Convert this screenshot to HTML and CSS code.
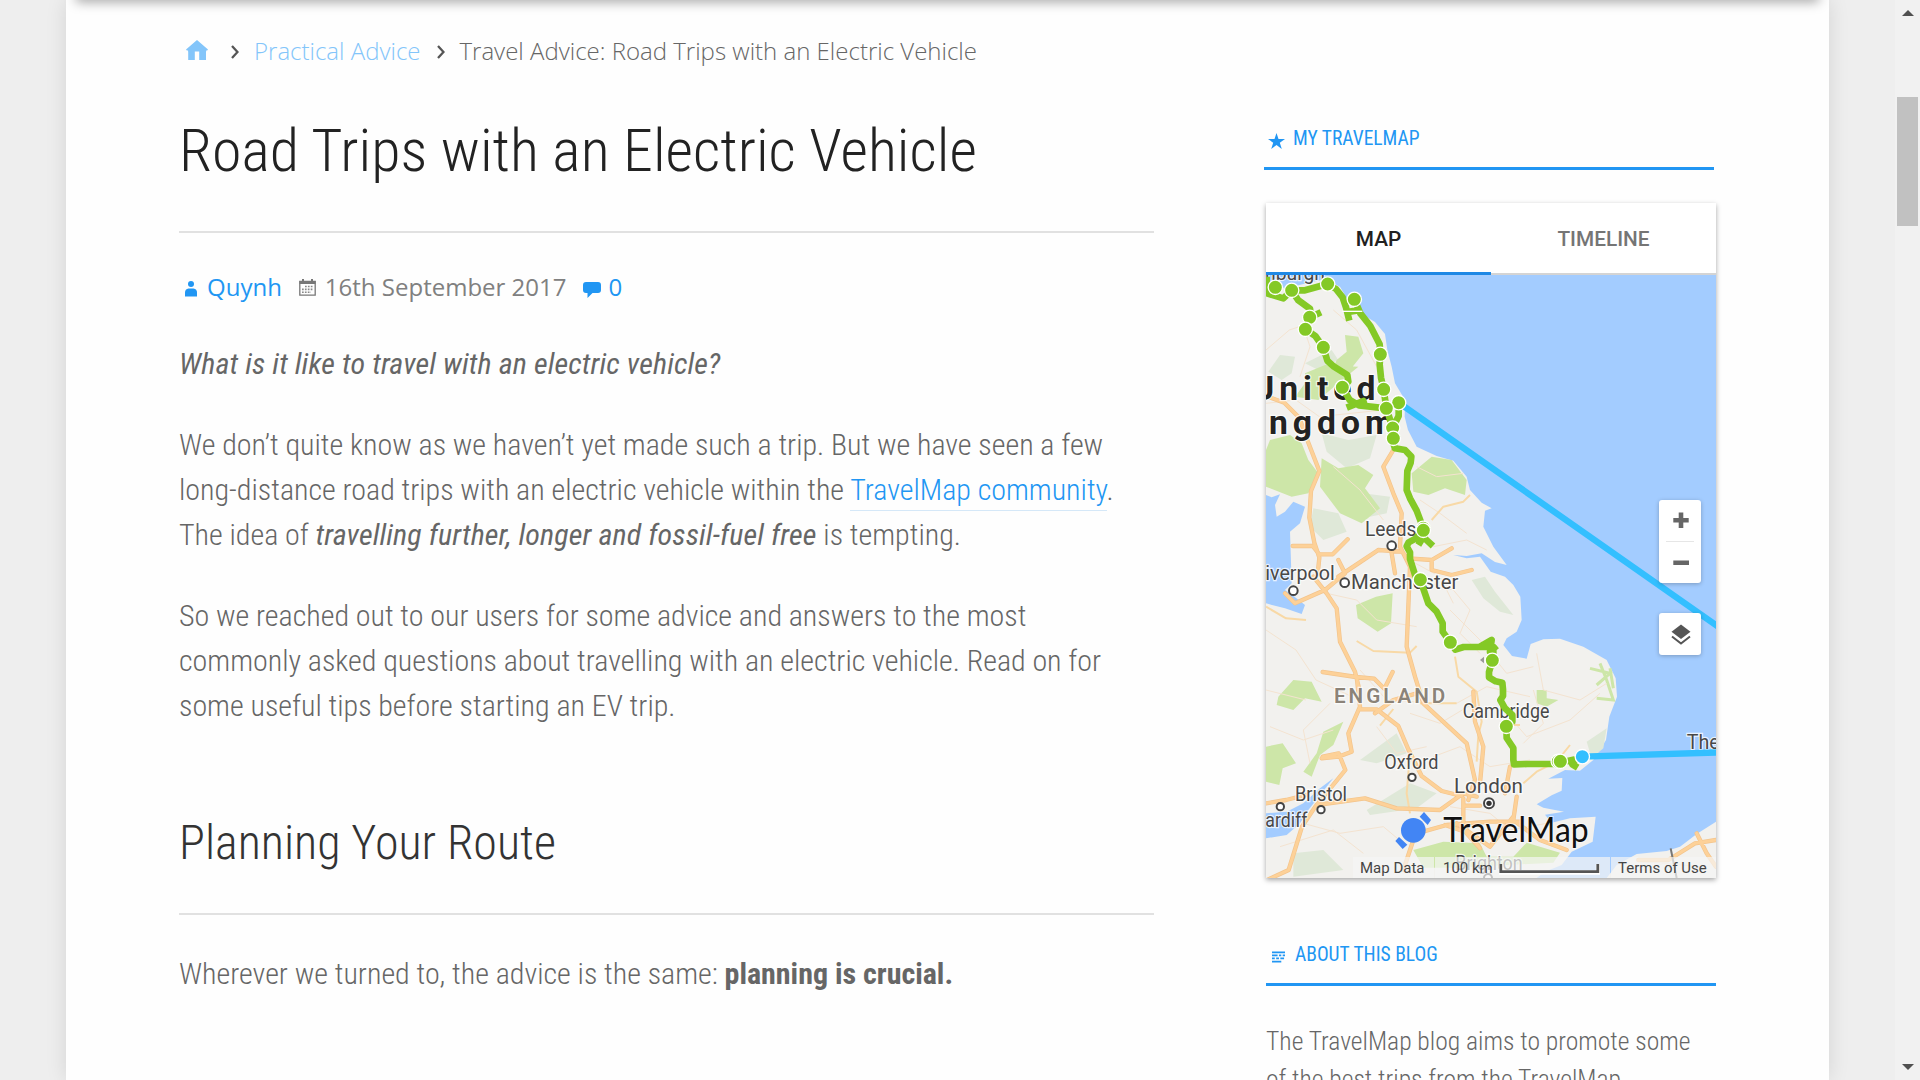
FILE: index.html
```
<!DOCTYPE html>
<html lang="en">
<head>
<meta charset="utf-8">
<title>Travel Advice: Road Trips with an Electric Vehicle</title>
<link rel="stylesheet" href="styles.css">
</head>
<body>
<div class="page">
  <div class="header-edge"></div>
  <main class="content">
    <nav class="crumbs">
      <svg class="crumb-home" viewBox="0 0 22 20"><path fill="#83c5fa" d="M11 0 0 9.600l.8.900H2.200V20h6.600v-9h4.400v9h6.800v-9.500h1.200l.8-.9z"/><path fill="#83c5fa" d="M2.200 10h18v1.500h-18z"/></svg>
      <svg class="crumb-sep" viewBox="0 0 8 14"><path d="M1 1l5.500 6L1 13" fill="none" stroke="#555" stroke-width="2.300"/></svg>
      <a class="crumb-link">Practical Advice</a>
      <svg class="crumb-sep second" viewBox="0 0 8 14"><path d="M1 1l5.500 6L1 13" fill="none" stroke="#555" stroke-width="2.300"/></svg>
      <span>Travel Advice: Road Trips with an Electric Vehicle</span>
    </nav>
    <h1 class="title">Road Trips with an Electric Vehicle</h1>
    <div class="meta">
      <svg class="ic-user" viewBox="0 0 12 16"><circle cx="6" cy="3" r="3"/><path d="M0 15.500v-4Q0 8 3.500 7.500h5Q12 8 12 11.500v4z"/></svg>
      <a class="blue">Quynh</a>
      <svg class="ic-cal" viewBox="0 0 17 17"><path fill="none" stroke="#777" stroke-width="1.300" d="M.8 2.500h15.400v13.700H.8z"/><path fill="#777" d="M.5 2h16v3H.500zM3 0h2v3H3zM12 0h2v3h-2z"/><path stroke="#888" stroke-width="1.600" stroke-dasharray="1.700 1.200" d="M6 7.500h8.500M3 10.400h11.500M3 13.300h9"/></svg>
      <span>16th September 2017</span>
      <svg class="ic-talk" viewBox="0 0 18 16"><path d="M3 0h12q3 0 3 3v5q0 3-3 3H9.500L4.500 16v-5H3q-3 0-3-3V3q0-3 3-3z"/></svg>
      <a class="blue">0</a>
    </div>
    <p><em>What is it like to travel with an electric vehicle?</em></p>
    <p>We don’t quite know as we haven’t yet made such a trip. But we have seen a few<br>long-distance road trips with an electric vehicle within the <a class="link">TravelMap community</a>.<br>The idea of <em>travelling further, longer and fossil-fuel free</em> is tempting.</p>
    <p>So we reached out to our users for some advice and answers to the most<br>commonly asked questions about travelling with an electric vehicle. Read on for<br>some useful tips before starting an EV trip.</p>
    <h2 class="section">Planning Your Route</h2>
    <p>Wherever we turned to, the advice is the same: <strong>planning is crucial.</strong></p>
  </main>
  <aside class="side">
    <h3 class="widget-title first"><svg class="ic-star" viewBox="0 0 17 16"><path d="M8.500 0l2 6H17l-5.200 3.700 2 6.300-5.300-3.900L3.200 16l2-6.300L0 6h6.500z"/></svg>MY TRAVELMAP</h3>
    <section class="card">
      <div class="tabs"><div class="tab active">MAP</div><div class="tab">TIMELINE</div></div>
      <div class="map">
        <svg class="map-art" viewBox="48 45 1350 1809">
          <rect x="48" y="45" width="1350" height="1809" fill="#a3ccff"/>
          <!-- Great Britain -->
          <path fill="#f2f1ee" d="M48 75L110 85 160 72 225 58 270 80 300 130 345 168 375 186 405 222 412 270 425 320 435 370 465 420 464 470 474 510 500 560 560 588 610 602 650 650 660 690 695 728 725 745 705 752 700 800 730 860 770 915 735 906 695 880 650 888 610 885 650 895 690 890 722 935 765 950 790 975 811 1010 815 1080 800 1115 770 1135 760 1155 786 1188 830 1196 842 1152 880 1138 930 1136 1000 1160 1070 1200 1097 1255 1101 1310 1078 1370 1068 1440 1030 1500 990 1532 945 1530 895 1556 937 1554 935 1592 905 1606 860 1633 880 1643 942 1655 885 1664 905 1688 960 1675 1037 1670 1028 1745 965 1775 935 1815 885 1835 860 1854H300L48 1854V1735L110 1725 150 1690 175 1650 250 1555 210 1585 160 1630 110 1655 48 1660V1030L105 1045 155 1062 165 1035 120 1000 105 990 125 970 120 815 150 790 165 740 130 725 105 755 80 770 75 735 90 703 65 712 48 705Z"/>
          <path fill="#f2f1ee" d="M1398 1685L1340 1722 1290 1760 1250 1773 1160 1782 1100 1815 1070 1854H1398Z"/>
          <!-- Parks and woodland -->
          <path fill="#dfe8d8" d="M90 285l45 5-10 50-30 20-40-25zM215 520l80 20 85-15-20 70-70 30-60-50zM340 700l80 10-10 50-50 10zM190 745l75 15 25 55-70 25-40-40zM165 310l80-40 20 30-60 30zM665 960l40-10 30 45 55 70-40-10-50-40zM330 1500l110-80 30 60-90 30zM350 1650l130-80 80 30-60 45-140 20zM1010 1445l60-40-10 60-35 30zM130 1780l90-10 60 60-150 20z"/>
          <path fill="#cde6a8" d="M60 540l60-15 35 25 20 50 30 40-30 60-50 10-77-30V570zM215 595l50 30 60-10 45 30-25 40 45 60-55 45-65-30-60-80zM285 225l40 5 15 50-40 50-65 30 25-60 30-25zM165 340l60-25 100 5-60 50-60 50-70-10 30-40zM485 640l60-50 60 10 45 60-5 45-60-20-50 20-45-10zM318 1035l60-25 50-10-5 90-40 25-60-40zM85 1310l45-50 55 5 30 60-50-10-35 35-50-15zM48 1460l50-10 40 60-40 15-10 50-40-10zM200 1480l20-65 60-30-30 70-40 30-25 65-25-15zM860 1290h30v25l35 5-35 20-30-10zM490 1770l90-25 110 5 20 40h80l40-42 100 30-20 30-300 15h-90z"/>
          <path fill="none" stroke="#cde6a8" stroke-width="9" d="M1020 1225l60 15-40 35M1050 1210l20 50 20 60-50-5M1080 1225l10 60"/>
          <!-- Minor roads -->
          <path class="minor" d="M48 270l70-60 60-20M160 200l20 60-30 90M250 150l70 60 60 110M48 430l90-10 70 50 190-20M230 1000l90 20 60 60 120 20M500 960l110 30 50 60-30 70 60 60M48 1110l90 60 60 90 130 60M48 1290l120 30M330 1230l80 90 150 10M600 1050l90 90 80 100 80-20M620 1330l90-50 130 30M770 1360l60 70 130-50 90-80M860 1180l20 110 110 30 80-50M850 1290l30 100-60 60M60 1400l100 40 90-30M240 1330l-80 80 20 100M480 1360l90 30 100-60M380 1400l60 80 90-20M550 1490l80-30 90 60 120-20M160 1690l110 30 130-20 60 50M90 1760l160-50 90 70M600 1640l120 20 60 50 110-20M460 890l110 60 40 80M550 860l100-20 60 30M510 720l60 40 80 60M250 620l80 70 70 90M500 620l60 30 80-10M1150 1840l90-30 110 10"/>
          <path class="mid" d="M545 780l35-40 60-15 20-20M48 1040l60 35 60 5M320 1143l50 30 110 5 20-20M615 1190l10 60 55 45 15 90-10 40-5 80M510 1330l110 0M390 1397l40-50M480 1480l-10 120 10 60M820 1570l40-35 60-30 40-50M750 1395l60 0"/>
          <!-- Motorways -->
          <path class="road-edge" d="M48 408l55 20 45 45 25 70 35 90-25 60-5 80 15 75 15 45-5 50M128 858h60l20 25h40l45-45M265 900l20 40-60 50-90 40-30-30M190 950l40 50 30 45 10 100 45 90 12 50M385 870l-60 40-60 40M385 870l70 5 20 20 70 5 60-35M425 880l10 60M545 900v30l60 15 60-15M430 570l-30 50 30 80 25 60-5 100 30 60-10 240 25 90 25 80 130 120 25 110-20 60M218 1236l100 15 55 5 30 30 25-50M320 1250l10 90-35 80 10 55-40 15-50 5M330 1348h50l65 50 30 70 40 80 60 45 60 15M500 1300l-70 20-55 40M218 1490l48-10 20 50-90 110-40 60-40 130-108 50M48 1630l60-10 60-15M200 1635l145-20 95 30 130 5 70-50 40 10M640 1615v80l50 70-45-50-60-20M690 1570l10-110-25-75-5-90M780 1520l-15 80M800 1610l-10 70 80 60 80 30M620 1690l100 70 70-90M500 1720l90-25 130-10 90 0M460 1830l30-90M640 1637h50M1165 1800l90 0 80-50 63-10M1340 1720l30 60 28 40"/>
          <path class="road" d="M48 408l55 20 45 45 25 70 35 90-25 60-5 80 15 75 15 45-5 50M128 858h60l20 25h40l45-45M265 900l20 40-60 50-90 40-30-30M190 950l40 50 30 45 10 100 45 90 12 50M385 870l-60 40-60 40M385 870l70 5 20 20 70 5 60-35M425 880l10 60M545 900v30l60 15 60-15M430 570l-30 50 30 80 25 60-5 100 30 60-10 240 25 90 25 80 130 120 25 110-20 60M218 1236l100 15 55 5 30 30 25-50M320 1250l10 90-35 80 10 55-40 15-50 5M330 1348h50l65 50 30 70 40 80 60 45 60 15M500 1300l-70 20-55 40M218 1490l48-10 20 50-90 110-40 60-40 130-108 50M48 1630l60-10 60-15M200 1635l145-20 95 30 130 5 70-50 40 10M640 1615v80l50 70-45-50-60-20M690 1570l10-110-25-75-5-90M780 1520l-15 80M800 1610l-10 70 80 60 80 30M620 1690l100 70 70-90M500 1720l90-25 130-10 90 0M460 1830l30-90M640 1637h50M1165 1800l90 0 80-50 63-10M1340 1720l30 60 28 40"/>
          <path d="M1262 1765l18 89" stroke="#777" stroke-width="6" fill="none"/>
          <!-- Towns -->
          <g fill="#fff" stroke="#444" stroke-width="6">
            <circle cx="425" cy="857" r="13"/><circle cx="284" cy="968" r="13"/><circle cx="130" cy="992" r="13"/><circle cx="486" cy="1552" r="11"/><circle cx="213" cy="1649" r="11"/><circle cx="91" cy="1640" r="11"/><circle cx="717" cy="1630" r="15"/><circle cx="714" cy="1854" r="12"/>
          </g>
          <circle cx="717" cy="1630" r="8" fill="#333"/>
          <g class="town">
            <text x="45" y="60" textLength="180" lengthAdjust="spacingAndGlyphs">nburgh</text>
            <text x="345" y="828" textLength="154" lengthAdjust="spacingAndGlyphs">Leeds</text>
            <text x="46" y="961" textLength="208" lengthAdjust="spacingAndGlyphs">iverpool</text>
            <text x="303" y="987" textLength="322" lengthAdjust="spacingAndGlyphs">Manchester</text>
            <text x="638" y="1375" textLength="260" lengthAdjust="spacingAndGlyphs">Cambridge</text>
            <text x="403" y="1526" textLength="162" lengthAdjust="spacingAndGlyphs">Oxford</text>
            <text x="612" y="1598" textLength="207" lengthAdjust="spacingAndGlyphs">London</text>
            <text x="135" y="1622" textLength="156" lengthAdjust="spacingAndGlyphs">Bristol</text>
            <text x="46" y="1702" textLength="126" lengthAdjust="spacingAndGlyphs">ardiff</text>
            <text x="1310" y="1466">The Hague</text>
            <text x="616" y="1829" textLength="202" lengthAdjust="spacingAndGlyphs">Brighton</text>
          </g>
          <text class="region" x="252" y="1328" textLength="334">ENGLAND</text>
          <text class="country" x="6" y="420">United</text>
          <text class="country" x="-64" y="522">Kingdom</text>
          <!-- Ferry legs -->
          <path fill="none" stroke="#33bfff" stroke-width="19" d="M446 428L1410 1104M997 1490L1410 1477"/>
          <!-- Driven route -->
          <path class="route" d="M50 50v50l50 15 25-24 40 0 68-19 25 15 20 25 10 30 10 40M125 91l20 30 35 25 3 25 30-14M179 172l-13 36 30 20 24 34 12 40 20 18 40 25 3 20-18 17 22 38 28 16 82 9M290 443l50-20 5 15M300 155l32-5M313 118l18 42 30 38 28 55 2 30-2 30 4 40 8 35 8 57M446 428v40l-18 36M446 430l-37 15 20 60M430 500v50l5 15 30 5 19 20-2 18-10 25-2 57 10 25 20 37 20 53-22 30-22 12-6 12 10 18 0 20 20 63M505 855l15-25 0-19 5 25 24 22"/>
          <path class="route" d="M511 960l12 35 12 35 25 25 18 35 0 25 23 32 15 22 25-8 90 0 8 10M690 1160l35-20-5 35 20 0M727 1201l-10 35 0 16 20 12 20 4 2 20 0 20-8 12 14 25 22 20 0 20-18 14 1 35 20 30 0 35 2 14 40-1 80 0 29-8 34-2 15-12M950 1504l20-5-3 14 16 10"/>
          <path d="M690 1200l12-10v20z" fill="#999"/>
          <path d="M277 154h60" stroke="#fff" stroke-width="4"/>
          <g class="stop">
            <circle cx="76" cy="82" r="21.500"/><circle cx="125" cy="91" r="21.500"/><circle cx="233" cy="72" r="21.500"/><circle cx="313" cy="118" r="21.500"/><circle cx="179" cy="172" r="21.500"/><circle cx="166" cy="208" r="21.500"/><circle cx="220" cy="262" r="21.500"/><circle cx="391" cy="283" r="21.500"/><circle cx="277" cy="382" r="21.500"/><circle cx="401" cy="388" r="21.500"/><circle cx="446" cy="428" r="21.500"/><circle cx="409" cy="445" r="21.500"/><circle cx="428" cy="504" r="21.500"/><circle cx="430" cy="535" r="21.500"/><circle cx="520" cy="805" r="21.500"/><circle cx="520" cy="811" r="21.500"/><circle cx="511" cy="959" r="21.500"/><circle cx="601" cy="1147" r="21.500"/><circle cx="727" cy="1201" r="21.500"/><circle cx="769" cy="1399" r="21.500"/><circle cx="925" cy="1504" r="21.500"/><circle cx="931" cy="1504" r="21.500"/>
            <circle class="sea" cx="997" cy="1490" r="21.500"/>
          </g>
          <!-- Brand mark -->
          <g fill="#4285f4"><circle cx="490" cy="1711" r="37"/><path d="M522 1656l21 24-10 15-24-25zM447 1731l25 23-14 13-22-24z"/></g>
          <text class="brand" x="580" y="1745" textLength="436" lengthAdjust="spacingAndGlyphs">TravelMap</text>
        </svg>
        <div class="controls">
          <div class="zoom-box">
            <svg viewBox="0 0 42 83"><path fill="#666" d="M14.300 18h5.400v-5.500h4.600V18h5.400v4.600h-5.400V28h-4.600v-5.400h-5.400zM14.300 60.500h15.700V65H14.300z"/><path fill="#e6e6e6" d="M7 41h28v1H7z"/></svg>
          </div>
          <div class="layer-box">
            <svg viewBox="0 0 42 42"><path fill="#555" d="M22 11.500l9.500 7.300-9.500 7.300-9.500-7.300z"/><path fill="none" stroke="#555" stroke-width="2" d="M13 23.500l9 7 9-7"/></svg>
          </div>
        </div>
        <div class="attribution">
          <span class="cell data">Map Data</span>
          <span class="cell scale">100 km<svg viewBox="0 0 101 11"><path d="M2 0v8.500h97V0" fill="none" stroke="#fff" stroke-width="4.500"/><path d="M1.800 0v7.700h97V0" fill="none" stroke="#555" stroke-width="2.800"/></svg></span>
          <span class="cell terms">Terms of Use</span>
        </div>
      </div>
    </section>
    <h3 class="widget-title about"><svg class="ic-lines" viewBox="0 0 14 12"><path fill="none" stroke-width="1.900" stroke="#2196f3" d="M0 1h14M0 4.300h6M7.500 4.300h2.500M11.500 4.300h2.500M0 7.600h3M4.500 7.600h3M9 7.600h4M0 11h10"/></svg>ABOUT THIS BLOG</h3>
    <p class="blurb">The TravelMap blog aims to promote some<br>of the best trips from the TravelMap</p>
  </aside>
</div>
<div class="scrollbar"><i class="up"></i><i class="thumb"></i><i class="down"></i></div>
</body>
</html>
```

FILE: styles.css
```
* { box-sizing: border-box; }
html, body { margin: 0; height: 1080px; overflow: hidden; }
body {
  display: flex;
  justify-content: space-between;
  padding-left: 66px;
  background: #eee;
  color: #666;
  font-family: "Roboto Condensed", Roboto, sans-serif;
  font-stretch: 75%;
  font-weight: 300;
}
svg { display: block; flex: none; }
p, h1, h2, h3 { margin: 0; font-weight: 300; white-space: nowrap; }

.page {
  position: relative;
  display: flex;
  width: 1763px;
  height: 1080px;
  padding-left: 113px;
  background: #fefefe;
  box-shadow: 0 0 20px rgba(0, 0, 0, .11);
}
.header-edge {
  position: absolute;
  top: -12px;
  left: 10px;
  right: 10px;
  height: 12px;
  box-shadow: 0 2px 12px rgba(0, 0, 0, .36);
}

.content { width: 975px; padding-top: 33px; }
.crumbs {
  display: flex;
  align-items: center;
  height: 36px;
  padding-left: 7px;
  font: 300 24px/36px "Open Sans", sans-serif;
  font-stretch: normal;
}
.crumb-home { width: 22px; height: 20px; margin-top: -2px; }
.crumb-sep { width: 8px; height: 14px; margin: 1px 15px 0 23px; }
.crumb-sep.second { margin: 1px 14px 0 17px; }
.crumb-link { color: #83c5fa; }

.title {
  margin-top: 46px;
  padding-bottom: 44px;
  border-bottom: 2px solid #e1e1e1;
  color: #222;
  font-size: 60px;
  line-height: 72px;
}
.meta {
  display: flex;
  align-items: center;
  height: 36px;
  margin: 36px 0 0 6px;
  color: #808080;
  font: 400 24px/36px "Open Sans", sans-serif;
  font-stretch: normal;
}
.meta svg { fill: #2196f3; }
.blue { color: #2196f3; }
.ic-user { width: 12px; height: 16px; margin: 3px 10px 0 0; }
.ic-cal { width: 17px; height: 17px; margin: 1px 9px 0 17px; }
.ic-talk { width: 18px; height: 16px; margin: 5px 7px 0 17px; }

.content p { margin-top: 36px; font-size: 30px; line-height: 45px; letter-spacing: -.01px; }
em { font-weight: 400; letter-spacing: .12px; }
strong { font-weight: 700; }
.link { color: #2196f3; padding-bottom: 3px; border-bottom: 1px solid #d5e8f8; }
.section {
  margin-top: 86px;
  padding-bottom: 41px;
  border-bottom: 2px solid #e1e1e1;
  color: #333;
  font-size: 48px;
  line-height: 58px;
}

.side { width: 450px; margin: 124px 0 0 112px; }
.widget-title {
  display: flex;
  align-items: center;
  width: 450px;
  height: 46px;
  padding-bottom: 13px;
  border-bottom: 3px solid #2196f3;
  color: #2196f3;
  font-size: 19.5px;
  font-weight: 400;
  line-height: 30px;
}
.widget-title.first { margin-left: -2px; }
.ic-star { width: 17px; height: 16px; margin: 3px 8px 0 4px; fill: #2196f3; }
.widget-title.about { margin-top: 62px; }
.ic-lines { width: 13px; height: 12px; margin: 4px 10px 0 6px; }
.side .blurb { margin-top: 36px; font-size: 25.6px; line-height: 38.4px; }

.card {
  width: 450px;
  margin-top: 33px;
  background: #fff;
  box-shadow: 0 2px 5px rgba(0, 0, 0, .35);
  font-family: Roboto, sans-serif;
  font-stretch: 100%;
}
.tabs { display: flex; height: 72px; }
.tab {
  flex: 1;
  padding-top: 20px;
  border-bottom: 2px solid #d4d4d4;
  color: #757575;
  font-size: 20.8px;
  font-weight: 500;
  line-height: 32px;
  text-align: center;
}
.tab.active { border-bottom: 3px solid #1e88e5; color: #212121; }

.map { position: relative; height: 603px; overflow: hidden; }
.map-art { width: 450px; height: 603px; font-family: Roboto, sans-serif; }
.minor { fill: none; stroke: #f4e3d0; stroke-width: 3; }
.mid { fill: none; stroke: #f8d9a6; stroke-width: 6; stroke-linejoin: round; }
.road-edge { fill: none; stroke: #f3c48c; stroke-width: 13; stroke-linejoin: round; stroke-linecap: round; }
.road { fill: none; stroke: #fdd198; stroke-width: 9; stroke-linejoin: round; stroke-linecap: round; }
.route { fill: none; stroke: #84c926; stroke-width: 20; stroke-linejoin: round; }
.stop { fill: #84c926; stroke: #fff; stroke-width: 4; }
.stop .sea { fill: #33bfff; }
.town, .region, .country { paint-order: stroke; stroke: rgba(255, 255, 255, .75); stroke-width: 7; }
.town { fill: #484848; font-size: 59px; font-weight: 400; }
.region { fill: #8b8378; font-size: 62px; font-weight: 600; }
.country { fill: #222; font-size: 101px; font-weight: 700; letter-spacing: 15px; }
.brand { fill: #111; font-family: Lato, sans-serif; font-size: 102px; font-weight: 400; paint-order: stroke; stroke: rgba(255, 255, 255, .6); stroke-width: 6; }

.controls {
  position: absolute;
  top: 225px;
  right: 15px;
  display: flex;
  flex-direction: column;
  gap: 30px;
}
.zoom-box, .layer-box { width: 42px; border-radius: 3px; background: #fff; box-shadow: 0 1px 4px rgba(0, 0, 0, .25); }
.zoom-box { height: 83px; }
.layer-box { height: 42px; }

.attribution {
  position: absolute;
  right: 0;
  bottom: 0;
  display: flex;
  gap: 1px;
  height: 21px;
  color: #444;
  font-size: 15px;
  font-weight: 400;
  line-height: 23px;
  white-space: nowrap;
}
.cell { display: flex; padding-left: 7px; background: rgba(245, 245, 245, .7); }
.data { width: 81px; }
.scale { width: 175px; padding-left: 8px; }
.scale svg { width: 101px; height: 11px; margin: 7px 0 0 6px; }
.terms { width: 105px; }

.scrollbar {
  display: flex;
  flex-direction: column;
  align-items: center;
  width: 25px;
  padding: 10px 0;
  background: #f1f1f1;
}
.up { border: 6px solid transparent; border-top: 0; border-bottom: 6px solid #505050; }
.thumb { width: 21px; height: 129px; margin: 81px 0 auto; background: #c1c1c1; }
.down { border: 6px solid transparent; border-bottom: 0; border-top: 6px solid #505050; }
```
